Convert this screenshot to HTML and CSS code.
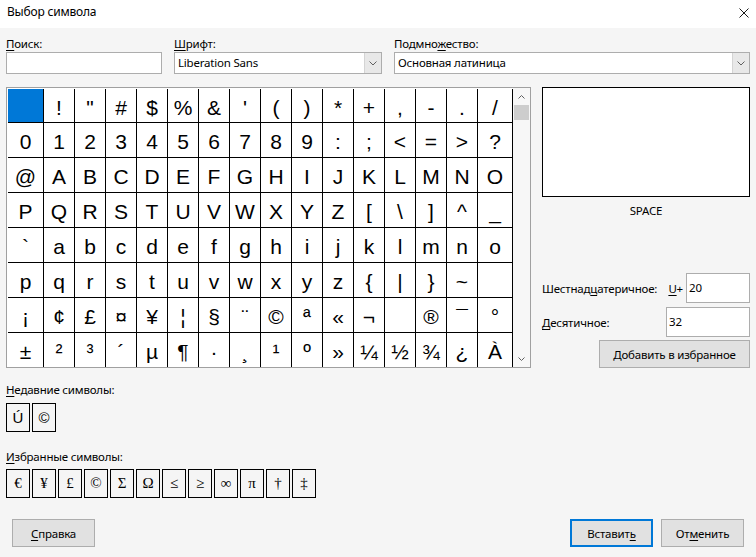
FILE: index.html
```html
<!DOCTYPE html>
<html lang="ru">
<head>
<meta charset="utf-8">
<title>Выбор символа</title>
<link rel="stylesheet" href="styles.css">
</head>
<body>
<div class="titlebar">
  <span class="title">Выбор символа</span>
  <svg class="close" width="10" height="10" viewBox="0 0 10 10"><path d="M0.5 0.5L9.5 9.5M9.5 0.5L0.5 9.5" stroke="#1a1a1a" stroke-width="1" fill="none"/></svg>
</div>
<div class="content">
  <div class="toprow">
    <div class="field">
      <div class="lbl"><u>П</u>оиск:</div>
      <div class="input"></div>
    </div>
    <div class="field">
      <div class="lbl"><u>Ш</u>рифт:</div>
      <div class="combo"><span class="ctext">Liberation Sans</span><span class="ddbtn"><svg width="8" height="5" viewBox="0 0 8 5"><path d="M0.5 0.5L4 4L7.5 0.5" stroke="#606060" fill="none"/></svg></span></div>
    </div>
    <div class="field">
      <div class="lbl">Подмно<u>ж</u>ество:</div>
      <div class="combo"><span class="ctext">Основная латиница</span><span class="ddbtn"><svg width="8" height="5" viewBox="0 0 8 5"><path d="M0.5 0.5L4 4L7.5 0.5" stroke="#606060" fill="none"/></svg></span></div>
    </div>
  </div>

  <div class="main">
    <div class="charbox">
      <div class="chargrid">
        <span class="sel"></span><span>!</span><span>"</span><span>#</span><span>$</span><span>%</span><span>&amp;</span><span>'</span><span>(</span><span>)</span><span>*</span><span>+</span><span>,</span><span>-</span><span>.</span><span>/</span>
        <span>0</span><span>1</span><span>2</span><span>3</span><span>4</span><span>5</span><span>6</span><span>7</span><span>8</span><span>9</span><span>:</span><span>;</span><span>&lt;</span><span>=</span><span>&gt;</span><span>?</span>
        <span>@</span><span>A</span><span>B</span><span>C</span><span>D</span><span>E</span><span>F</span><span>G</span><span>H</span><span>I</span><span>J</span><span>K</span><span>L</span><span>M</span><span>N</span><span>O</span>
        <span>P</span><span>Q</span><span>R</span><span>S</span><span>T</span><span>U</span><span>V</span><span>W</span><span>X</span><span>Y</span><span>Z</span><span>[</span><span>\</span><span>]</span><span>^</span><span>_</span>
        <span>`</span><span>a</span><span>b</span><span>c</span><span>d</span><span>e</span><span>f</span><span>g</span><span>h</span><span>i</span><span>j</span><span>k</span><span>l</span><span>m</span><span>n</span><span>o</span>
        <span>p</span><span>q</span><span>r</span><span>s</span><span>t</span><span>u</span><span>v</span><span>w</span><span>x</span><span>y</span><span>z</span><span>{</span><span>|</span><span>}</span><span>~</span><span></span>
        <span>¡</span><span>¢</span><span>£</span><span>¤</span><span>¥</span><span>¦</span><span>§</span><span>¨</span><span>©</span><span>ª</span><span>«</span><span>¬</span><span></span><span>®</span><span>¯</span><span>°</span>
        <span>±</span><span>²</span><span>³</span><span>´</span><span>µ</span><span>¶</span><span>·</span><span>¸</span><span>¹</span><span>º</span><span>»</span><span>¼</span><span>½</span><span>¾</span><span>¿</span><span>À</span>
      </div>
      <div class="vscroll">
        <div class="sbtn"><svg width="7" height="4" viewBox="0 0 7 4"><path d="M0.5 3.5L3.5 0.5L6.5 3.5" stroke="#606060" fill="none"/></svg></div>
        <div class="thumb"></div>
        <div class="track"></div>
        <div class="sbtn"><svg width="7" height="4" viewBox="0 0 7 4"><path d="M0.5 0.5L3.5 3.5L6.5 0.5" stroke="#606060" fill="none"/></svg></div>
      </div>
    </div>

    <div class="side">
      <div class="preview"></div>
      <div class="charname">SPACE</div>
      <div class="hexrow">
        <span class="rlbl">Шестнад<u>ц</u>атеричное:</span>
        <span class="uplus"><u>U</u>+</span>
        <div class="input hexin">20</div>
      </div>
      <div class="decrow">
        <span class="rlbl"><u>Д</u>есятичное:</span>
        <div class="input decin">32</div>
      </div>
      <div class="btn addbtn">Добавить в избранное</div>
    </div>
  </div>

  <div class="seclbl recent-lbl"><u>Н</u>едавние символы:</div>
  <div class="symrow">
    <span class="sym">Ú</span><span class="sym">©</span>
  </div>

  <div class="seclbl fav-lbl"><u>И</u>збранные символы:</div>
  <div class="symrow favrow">
    <span class="sym">€</span><span class="sym">¥</span><span class="sym">£</span><span class="sym">©</span><span class="sym">Σ</span><span class="sym">Ω</span><span class="sym">≤</span><span class="sym">≥</span><span class="sym">∞</span><span class="sym">π</span><span class="sym">†</span><span class="sym">‡</span>
  </div>
</div>

<div class="footer">
  <div class="btn"><span><u>С</u>правка</span></div>
  <div class="rightbtns">
    <div class="btn default"><span>Вставит<u>ь</u></span></div>
    <div class="btn"><span>От<u>м</u>енить</span></div>
  </div>
</div>
</body>
</html>
```

FILE: styles.css
```css
* { box-sizing: border-box; }

body {
  margin: 0;
  width: 756px;
  height: 557px;
  overflow: hidden;
  background: #f5f5f5;
  font-family: "Noto Sans", sans-serif;
  font-size: 11.5px;
  letter-spacing: -0.2px;
  color: #000;
}

u { text-decoration: underline; text-underline-offset: 2px; }

.titlebar {
  height: 28px;
  background: #fff;
  display: flex;
  justify-content: space-between;
  align-items: flex-start;
  padding: 4px 7px 0 7px;
}
.title { line-height: 16px; font-size: 12px; }
.close { margin-top: 4px; }

.content { padding: 0 6px; }

.toprow {
  display: grid;
  grid-template-columns: 156px 208px 356px;
  column-gap: 12px;
  padding-top: 8px;
}
.lbl { line-height: 16px; height: 16px; }

.input {
  height: 22px;
  border: 1px solid #adadad;
  background: #fff;
  padding-left: 2px;
  line-height: 20px;
}

.combo {
  height: 22px;
  border: 1px solid #adadad;
  background: #fff;
  display: flex;
  align-items: stretch;
}
.ctext { flex: 1; padding-left: 3px; line-height: 20px; }
.ddbtn {
  width: 17px;
  background: #e8e8e8;
  border-left: 1px solid #d4d4d4;
  display: flex;
  align-items: center;
  justify-content: center;
}

.main {
  display: flex;
  gap: 11px;
  margin-top: 13px;
}

.charbox {
  width: 525px;
  height: 281px;
  border: 1px solid #a0a0a0;
  background: #fff;
  display: flex;
}
.chargrid {
  margin: 1px 0 0 1px;
  display: grid;
  grid-template-columns: 36px repeat(14, 31px) 35px;
  grid-template-rows: 34px repeat(6, 35px) 34px;
  font-family: "Liberation Sans", Arial, sans-serif;
  font-size: 21px;
  letter-spacing: 0;
}
.chargrid span {
  border-right: 1px solid #000;
  border-bottom: 1px solid #000;
  display: flex;
  align-items: center;
  justify-content: center;
  padding-top: 4px;
}
.chargrid span:nth-last-child(-n+16) { border-bottom: 0; }
.chargrid span.sel { background: #0078d7; }

.vscroll {
  width: 17px;
  background: #f7f7f7;
  display: flex;
  flex-direction: column;
}
.sbtn {
  height: 17px;
  display: flex;
  align-items: center;
  justify-content: center;
}
.thumb {
  height: 15px;
  margin: 0 1px;
  background: #cdcdcd;
}
.track { flex: 1; }

.side {
  width: 208px;
  height: 281px;
  display: flex;
  flex-direction: column;
}
.preview {
  height: 110px;
  border: 1px solid #000;
  background: #fff;
}
.charname {
  text-align: center;
  margin-top: 6px;
  line-height: 16px;
}
.hexrow {
  margin-top: auto;
  height: 30px;
  display: flex;
  align-items: center;
}
.rlbl { flex: 1; }
.uplus { margin-right: 3px; }
.hexin { width: 64px; height: 30px; line-height: 28px; }
.decrow {
  margin-top: 4px;
  height: 30px;
  display: flex;
  align-items: center;
}
.decin { width: 84px; height: 30px; line-height: 28px; }

.btn {
  width: 83px;
  height: 28px;
  background: #e1e1e1;
  border: 1px solid #adadad;
  display: flex;
  align-items: center;
  justify-content: center;
}
.addbtn {
  margin-top: 3px;
  align-self: flex-end;
  width: 151px;
}
.btn.default { border: 2px solid #0078d7; }

.seclbl { line-height: 16px; }
.recent-lbl { margin-top: 14px; }
.fav-lbl { margin-top: 17px; }

.symrow {
  display: flex;
  gap: 2px;
  margin-top: 5px;
}
.favrow { margin-top: 4px; }
.sym {
  width: 24px;
  height: 29px;
  border: 1px solid #000;
  display: flex;
  align-items: center;
  justify-content: center;
  font-family: "Liberation Sans", sans-serif;
  font-size: 15px;
  letter-spacing: 0;
}
.favrow .sym { font-family: "Liberation Serif", serif; font-size: 15px; }

.footer {
  display: flex;
  justify-content: space-between;
  padding: 0 12px;
  margin-top: 21px;
}
.rightbtns { display: flex; gap: 8px; }
```
